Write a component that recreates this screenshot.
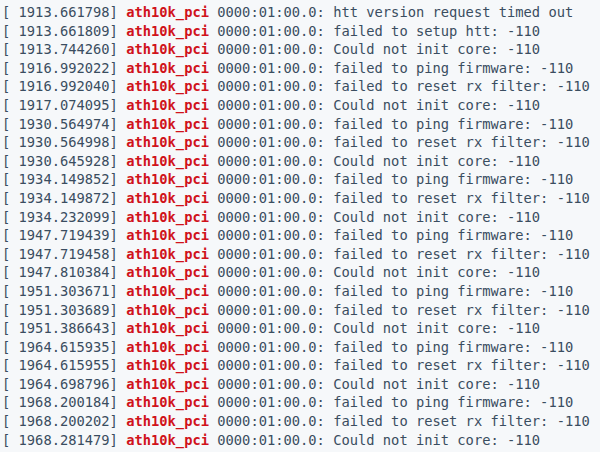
import React from "react"

type Entry = { ts: string; msg: string }

const entries: Entry[] = [
	{ ts: "1913.661798", msg: "htt version request timed out" },
	{ ts: "1913.661809", msg: "failed to setup htt: -110" },
	{ ts: "1913.744260", msg: "Could not init core: -110" },
	{ ts: "1916.992022", msg: "failed to ping firmware: -110" },
	{ ts: "1916.992040", msg: "failed to reset rx filter: -110" },
	{ ts: "1917.074095", msg: "Could not init core: -110" },
	{ ts: "1930.564974", msg: "failed to ping firmware: -110" },
	{ ts: "1930.564998", msg: "failed to reset rx filter: -110" },
	{ ts: "1930.645928", msg: "Could not init core: -110" },
	{ ts: "1934.149852", msg: "failed to ping firmware: -110" },
	{ ts: "1934.149872", msg: "failed to reset rx filter: -110" },
	{ ts: "1934.232099", msg: "Could not init core: -110" },
	{ ts: "1947.719439", msg: "failed to ping firmware: -110" },
	{ ts: "1947.719458", msg: "failed to reset rx filter: -110" },
	{ ts: "1947.810384", msg: "Could not init core: -110" },
	{ ts: "1951.303671", msg: "failed to ping firmware: -110" },
	{ ts: "1951.303689", msg: "failed to reset rx filter: -110" },
	{ ts: "1951.386643", msg: "Could not init core: -110" },
	{ ts: "1964.615935", msg: "failed to ping firmware: -110" },
	{ ts: "1964.615955", msg: "failed to reset rx filter: -110" },
	{ ts: "1964.698796", msg: "Could not init core: -110" },
	{ ts: "1968.200184", msg: "failed to ping firmware: -110" },
	{ ts: "1968.200202", msg: "failed to reset rx filter: -110" },
	{ ts: "1968.281479", msg: "Could not init core: -110" }
]

export default function App(): React.ReactElement {
	return (
		<div className="w-[600px] h-[452px] overflow-hidden bg-[#f6f8fa] pt-[3px] pl-[2px] font-['DejaVu_Sans_Mono',monospace] text-[13.75px] leading-[18.6px] text-[#3a4d60] whitespace-pre">
			{entries.map((e) => (
				<div key={e.ts}>
					{`[ ${e.ts}] `}
					<span className="font-bold text-[#d0121b]">ath10k_pci</span>
					{` 0000:01:00.0: ${e.msg}`}
				</div>
			))}
		</div>
	)
}
